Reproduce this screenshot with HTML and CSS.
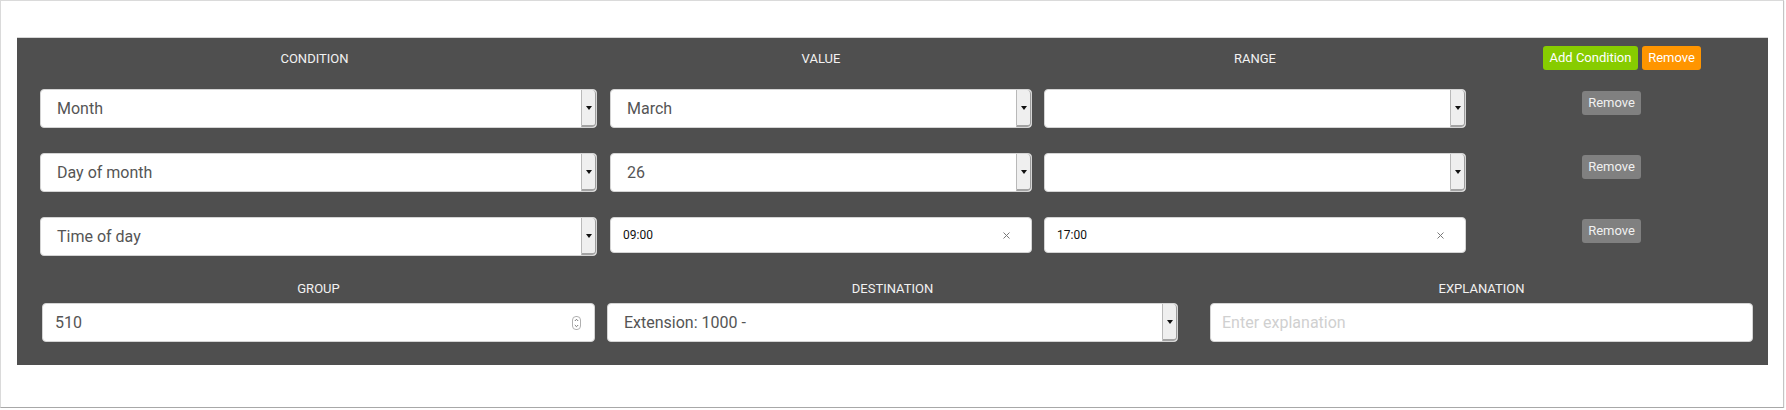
FILE: index.html
```html
<!DOCTYPE html>
<html>
<head>
<meta charset="utf-8">
<link rel="stylesheet" href="styles.css">
</head>
<body>
<div class="card">
  <div class="panel">
    <div class="row head">
      <div class="c-cond label label-cond">CONDITION</div>
      <div class="c-val label">VALUE</div>
      <div class="c-range label">RANGE</div>
      <div class="c-act head-act">
        <button class="btn green">Add Condition</button>
        <button class="btn orange">Remove</button>
      </div>
    </div>

    <div class="rows">
      <div class="row cond">
        <div class="c-cond select"><span class="text">Month</span><span class="arrow"><i></i></span></div>
        <div class="c-val select"><span class="text">March</span><span class="arrow"><i></i></span></div>
        <div class="c-range select"><span class="text"></span><span class="arrow"><i></i></span></div>
        <div class="c-act act"><button class="btn grey">Remove</button></div>
      </div>
      <div class="row cond">
        <div class="c-cond select"><span class="text">Day of month</span><span class="arrow"><i></i></span></div>
        <div class="c-val select"><span class="text">26</span><span class="arrow"><i></i></span></div>
        <div class="c-range select"><span class="text"></span><span class="arrow"><i></i></span></div>
        <div class="c-act act"><button class="btn grey">Remove</button></div>
      </div>
      <div class="row cond">
        <div class="c-cond select"><span class="text">Time of day</span><span class="arrow"><i></i></span></div>
        <div class="c-val time"><span class="ttext">09:00</span><svg class="clear" width="7" height="7" viewBox="0 0 7 7"><path d="M0.5 0.5 L6.5 6.5 M6.5 0.5 L0.5 6.5" stroke="#7a7a7a" stroke-width="1"/></svg></div>
        <div class="c-range time"><span class="ttext">17:00</span><svg class="clear" width="7" height="7" viewBox="0 0 7 7"><path d="M0.5 0.5 L6.5 6.5 M6.5 0.5 L0.5 6.5" stroke="#7a7a7a" stroke-width="1"/></svg></div>
        <div class="c-act act"><button class="btn grey">Remove</button></div>
      </div>
    </div>

    <div class="row bottom">
      <div class="field f-group">
        <div class="label">GROUP</div>
        <div class="input num"><span class="text">510</span>
          <svg class="spin" width="9" height="14" viewBox="0 0 9 14"><rect x="0.5" y="0.5" width="8" height="13" rx="3.5" fill="#fff" stroke="#b0b0b0"/><path d="M2.8 5 L4.5 3.3 L6.2 5 M2.8 9 L4.5 10.7 L6.2 9" fill="none" stroke="#666" stroke-width="0.9"/></svg>
        </div>
      </div>
      <div class="field f-dest">
        <div class="label">DESTINATION</div>
        <div class="select"><span class="text">Extension: 1000 -</span><span class="arrow"><i></i></span></div>
      </div>
      <div class="field f-expl">
        <div class="label">EXPLANATION</div>
        <div class="input expl"><span class="placeholder">Enter explanation</span></div>
      </div>
    </div>
  </div>
</div>
</body>
</html>
```

FILE: styles.css
```css
html, body {
  margin: 0;
  padding: 0;
  background: #ffffff;
}

body {
  font-family: Roboto, "Liberation Sans", Arial, sans-serif;
}

.card {
  box-sizing: border-box;
  width: 1784px;
  height: 408px;
  border: 1px solid #dadada;
  border-bottom-color: #a8a8a8;
  border-right-color: #c4c4c4;
  box-shadow: 0 1px 1px rgba(0, 0, 0, 0.25);
  padding-top: 36px;
  padding-left: 16px;
}

.panel {
  box-sizing: border-box;
  width: 1751px;
  height: 328px;
  background: #4f4f4f;
  border-top: 1px solid #d6d6d6;
  padding-top: 8px;
}

.row {
  display: flex;
}

.head {
  height: 24px;
  padding-left: 23px;
  align-items: center;
}

.c-cond { width: 557px; box-sizing: border-box; }
.c-val { width: 422px; margin-left: 13px; box-sizing: border-box; }
.c-range { width: 422px; margin-left: 12px; box-sizing: border-box; }
.c-act { width: 291px; box-sizing: border-box; display: flex; justify-content: center; }

.label {
  color: #f2f2f2;
  font-size: 13px;
  line-height: 17px;
  text-align: center;
  text-transform: uppercase;
}

.label-cond {
  padding-right: 8px;
}

.head-act {
  padding-left: 21px;
  gap: 4px;
}

.btn {
  height: 24px;
  border: none;
  border-radius: 3px;
  font-family: Roboto, "Liberation Sans", Arial, sans-serif;
  font-size: 13px;
  line-height: 24px;
  padding: 0;
  color: #ffffff;
  cursor: pointer;
}

.green { background: #87cc00; width: 95px; }
.orange { background: #ff9500; width: 59px; }
.grey { background: #808080; color: #f0f0f0; width: 59px; }

.rows {
  margin-top: 19px;
  display: flex;
  flex-direction: column;
  gap: 25px;
}

.cond {
  padding-left: 23px;
  height: 39px;
  align-items: flex-start;
}

.act {
  padding-top: 2px;
}

.select {
  display: flex;
  height: 39px;
  box-sizing: border-box;
  background: #ffffff;
  border: 1px solid #d4d4d4;
  border-radius: 4px;
  overflow: hidden;
}

.select .text, .input .text {
  flex: 1;
  padding-left: 16px;
  padding-top: 1px;
  font-size: 16px;
  line-height: 36px;
  color: #555555;
  white-space: nowrap;
}

.arrow {
  width: 13px;
  flex: none;
  background: #efefef;
  border-left: 1px solid #b9b9b9;
  border-right: 1px solid #9c9c9c;
  border-bottom: 2px solid #a3a3a3;
  border-radius: 0 4px 4px 0;
  display: flex;
  align-items: center;
  justify-content: center;
  padding-top: 1px;
}

.arrow i {
  width: 0;
  height: 0;
  border-left: 3px solid transparent;
  border-right: 3px solid transparent;
  border-top: 4px solid #111111;
}

.time {
  display: flex;
  align-items: center;
  height: 36px;
  box-sizing: border-box;
  background: #ffffff;
  border: 1px solid #d4d4d4;
  border-radius: 4px;
  padding-left: 12px;
  padding-right: 21px;
}

.ttext {
  flex: 1;
  font-size: 12px;
  color: #111111;
}

.clear {
  display: block;
}

.bottom {
  margin-top: 24px;
  padding-left: 25px;
  align-items: flex-start;
}

.field {
  display: flex;
  flex-direction: column;
  gap: 6px;
}

.f-group { width: 553px; }
.f-dest { width: 571px; margin-left: 12px; }
.f-expl { width: 543px; margin-left: 32px; }

.input {
  display: flex;
  align-items: center;
  height: 39px;
  box-sizing: border-box;
  background: #ffffff;
  border: 1px solid #d4d4d4;
  border-radius: 4px;
}

.num .text {
  padding-left: 12px;
}

.spin {
  display: block;
  margin-right: 13px;
}

.expl {
  padding-left: 11px;
}

.placeholder {
  font-size: 16px;
  color: #d0d0d0;
}
```
